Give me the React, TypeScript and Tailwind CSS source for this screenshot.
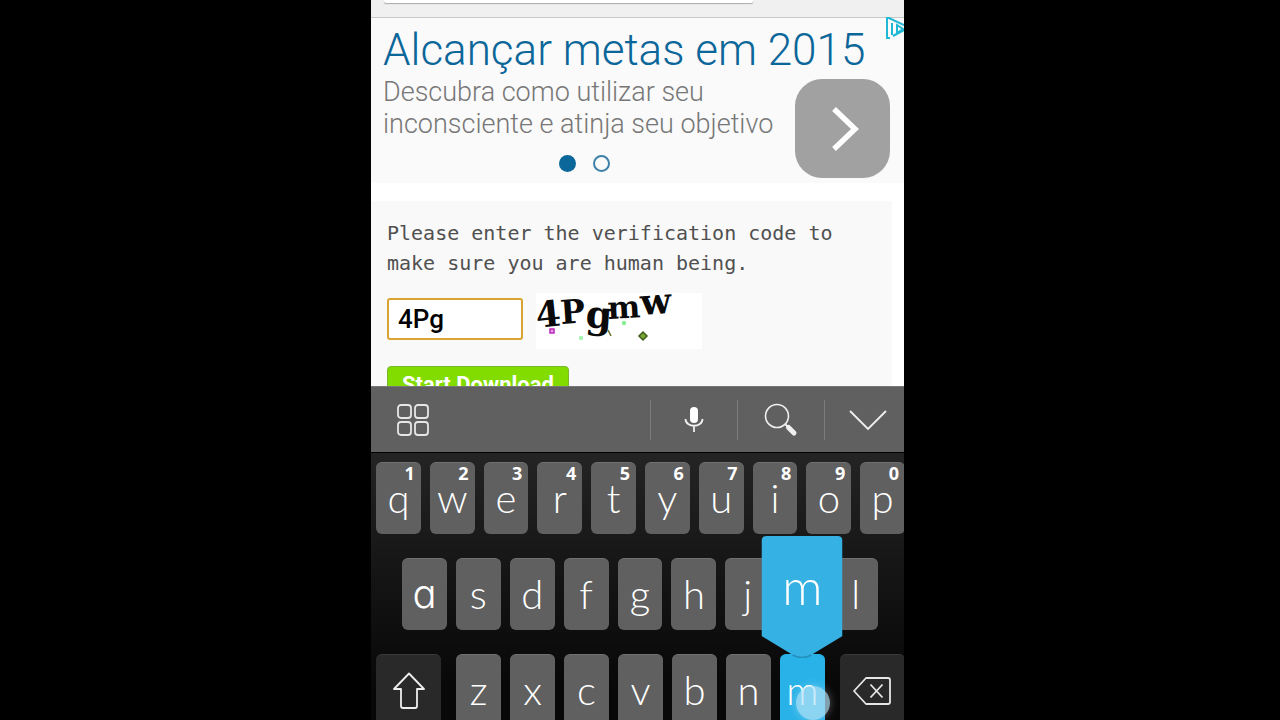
import type { ReactNode } from "react";

const topRow = ["q", "w", "e", "r", "t", "y", "u", "i", "o", "p"];
const homeRow = ["a", "s", "d", "f", "g", "h", "j", "k", "l"];
const bottomRow = ["z", "x", "c", "v", "b", "n"];

function Letter({ char }: { char: string }) {
  const face =
    char === "a"
      ? "font-['Inter',sans-serif] [font-feature-settings:'cv11']"
      : "font-['Lato',sans-serif]";
  return <span className={`${face} text-[40px] font-light leading-8`}>{char}</span>;
}

function Key({ char, hint }: { char: string; hint?: string }) {
  return (
    <button
      type="button"
      className="relative flex h-[72px] items-end justify-center rounded-md border-t border-[#707070] bg-[#606060] pb-5 text-white"
    >
      {hint && (
        <span className="absolute right-1.5 top-0.5 font-['Open_Sans',sans-serif] text-[18px] font-bold leading-4 text-white">
          {hint}
        </span>
      )}
      <Letter char={char} />
    </button>
  );
}

function ToolButton({ label, children }: { label: string; children: ReactNode }) {
  return (
    <button
      type="button"
      aria-label={label}
      className="flex h-10 w-[87px] shrink-0 items-center justify-center border-l border-[#7c7c7c] text-[#f0f0f0]"
    >
      {children}
    </button>
  );
}

function Captcha() {
  return (
    <svg
      width="166"
      height="56"
      viewBox="0 0 166 56"
      role="img"
      aria-label="Verification code"
      className="overflow-visible bg-white"
    >
      <text fontWeight="bold" fontFamily="'DejaVu Serif', serif" fill="#0a0a0a">
        <tspan x="1" y="35" rotate="-6" fontSize="36">
          4
        </tspan>
        <tspan x="25" y="31" rotate="-4" fontSize="33">
          P
        </tspan>
        <tspan x="49" y="34" rotate="4" fontSize="38">
          g
        </tspan>
        <tspan x="72" y="26" rotate="-3" fontSize="31">
          m
        </tspan>
        <tspan x="105" y="22" rotate="-4" fontSize="36">
          w
        </tspan>
      </text>
      <rect x="14" y="36" width="4" height="4" fill="#e9a0e6" stroke="#b827b8" strokeWidth="1.5" />
      <circle cx="45" cy="45" r="2.2" fill="#a5f3b0" />
      <circle cx="88" cy="30" r="2.2" fill="#8bee98" />
      <path d="M72 37l3 6" stroke="#69702a" strokeWidth="1.5" />
      <path d="M107 39l4 4-4 4-4-4z" fill="#78a437" stroke="#3f5f18" strokeWidth="1.5" />
    </svg>
  );
}

function Advert() {
  return (
    <section className="relative h-[165px] shrink-0 bg-[#fafafa] pl-3 font-['Roboto',sans-serif] font-light">
      <h1 className="pt-[7px] text-[44px] leading-[50px] whitespace-nowrap text-[#0b6699]">Alcançar metas em 2015</h1>
      <div className="flex justify-between pr-3.5">
        <div>
          <p className="pt-px text-[27px] leading-8 whitespace-nowrap text-[#777]">
            Descubra como utilizar seu
            <br />
            inconsciente e atinja seu objetivo
          </p>
          <div className="mt-[15px] flex justify-center gap-[17px] pl-3">
            <span className="size-[17px] rounded-full bg-[#0b6699]" />
            <span className="size-[17px] rounded-full border-2 border-[#3d80a8]" />
          </div>
        </div>
        <button
          type="button"
          aria-label="Abrir"
          className="mt-1 flex h-[99px] w-[95px] shrink-0 items-center justify-center rounded-[27px] bg-[#a1a1a1]"
        >
          <svg width="28" height="46" viewBox="0 0 28 46" fill="none" stroke="white" strokeWidth="5.5" className="ml-1">
            <path d="M3 3l21 20L3 43" />
          </svg>
        </button>
      </div>
      <svg
        className="absolute -top-px right-0"
        width="19"
        height="23"
        viewBox="0 0 19 23"
        fill="none"
        stroke="#20b8d4"
        strokeWidth="2"
      >
        <path d="M19 8L4 1H2v20h3" />
        <path d="M7 18V6M8 19l11-6" />
        <path d="M12 8v8l6-4z" />
      </svg>
    </section>
  );
}

function Verification() {
  return (
    <form className="mt-[18px] mr-3 flex-1 bg-[#f9f9f9] px-4 pt-[17px]">
      <label
        htmlFor="code"
        className="block font-['DejaVu_Sans_Mono',monospace] text-[20px] leading-[30px] whitespace-nowrap text-[#505050]"
      >
        Please enter the verification code to
        <br />
        make sure you are human being.
      </label>
      <div className="mt-[15px] flex items-start gap-[13px]">
        <input
          id="code"
          defaultValue="4Pg"
          className="mt-[5px] h-[42px] w-[136px] rounded-[3px] border-2 border-[#d9a431] bg-white px-[9px] font-['Roboto',sans-serif] text-[26px] font-medium text-black outline-none"
        />
        <Captcha />
      </div>
      <button
        type="button"
        className="mt-[17px] rounded-[4px] border border-[#79b82a] bg-[#83dc00] px-3.5 py-1 font-['Roboto',sans-serif] text-[22px] font-bold leading-7 text-white"
      >
        Start Download
      </button>
    </form>
  );
}

function Toolbar() {
  return (
    <div className="flex h-[67px] items-center overflow-hidden border-t border-b border-t-[#777] border-b-black bg-[#606060]">
      <button type="button" aria-label="Apps" className="ml-[26px] text-[#e6e6e6]">
        <svg width="32" height="32" viewBox="0 0 32 32" fill="none" stroke="currentColor" strokeWidth="1.8">
          <rect x="1" y="1" width="13" height="13" rx="3" />
          <rect x="18" y="1" width="13" height="13" rx="3" />
          <rect x="1" y="18" width="13" height="13" rx="3" />
          <rect x="18" y="18" width="13" height="13" rx="3" />
        </svg>
      </button>
      <div className="-mr-[7px] ml-auto flex shrink-0">
        <ToolButton label="Voice input">
          <svg width="20" height="26" viewBox="0 0 20 26" fill="none" stroke="currentColor" strokeWidth="1.8">
            <rect x="6" y="0" width="8" height="16" rx="4" fill="white" stroke="none" />
            <path d="M1.5 12c0 9 17 9 17 0M10 19v6" />
          </svg>
        </ToolButton>
        <ToolButton label="Search">
          <svg width="34" height="34" viewBox="0 0 34 34" fill="none" stroke="currentColor" strokeWidth="1.6">
            <circle cx="13" cy="13" r="11.5" />
            <path d="M21 21l3 3" strokeWidth="2" />
            <path d="M24.500 24.500l5.500 5.500" strokeWidth="5" strokeLinecap="round" />
          </svg>
        </ToolButton>
        <ToolButton label="Hide keyboard">
          <svg width="38" height="22" viewBox="0 0 38 22" fill="none" stroke="currentColor" strokeWidth="1.8">
            <path d="M1 2l18 18L37 2" />
          </svg>
        </ToolButton>
      </div>
    </div>
  );
}

function PressedKey() {
  return (
    <button
      type="button"
      className="relative flex h-[72px] items-end justify-center rounded-md border-t border-[#29b2e8] bg-[#29b2e8] pb-5 text-white"
    >
      <Letter char="m" />
      <span className="absolute bottom-[68px] left-1/2 flex h-[122px] w-[81px] -translate-x-1/2 justify-center pt-5">
        <svg className="absolute inset-0" width="81" height="122" viewBox="0 0 81 122">
          <path d="M5 0h71q5 0 5 5v95L48 120q-7.500 4-15 0L0 100V5q0-5 5-5z" fill="#35b1e3" />
          <path d="M31 119q9.500 5 19 0" fill="none" stroke="#238fba" strokeWidth="1.500" />
        </svg>
        <span className="relative font-['Lato',sans-serif] text-[50px] font-light leading-[60px]">m</span>
      </span>
      <span className="absolute left-4 top-[31px] size-[34px] rounded-full bg-[#b5e2f6]/70 shadow-[0_0_10px_rgba(255,255,255,0.3)]" />
    </button>
  );
}

function Keyboard() {
  return (
    <div className="min-h-0 flex-[334] bg-linear-to-b from-[#242424] from-20% to-[#080808] to-90%">
      <Toolbar />
      <div className="-mr-px mt-[9px] grid grid-cols-10 gap-[9px] pl-[5px]">
        {topRow.map((char, i) => (
          <Key key={char} char={char} hint={String((i + 1) % 10)} />
        ))}
      </div>
      <div className="mt-6 grid grid-cols-9 gap-[9px] pr-[26px] pl-[31px]">
        {homeRow.map((char) => (
          <Key key={char} char={char} />
        ))}
      </div>
      <div className="-mr-px mt-6 flex gap-[15px] pl-[5px]">
        <button
          type="button"
          aria-label="Shift"
          className="flex h-[72px] flex-[65] items-center justify-center rounded-md border-t border-[#3c3c3c] bg-[#292929]"
        >
          <svg width="34" height="38" viewBox="0 0 34 38" fill="none" stroke="#eee" strokeWidth="1.8" strokeLinejoin="round">
            <path d="M17 1.500L32 17h-7v17q0 2-2 2H11q-2 0-2-2V17H2z" />
          </svg>
        </button>
        <div className="grid flex-[368] grid-cols-7 gap-[9px]">
          {bottomRow.map((char) => (
            <Key key={char} char={char} />
          ))}
          <PressedKey />
        </div>
        <button
          type="button"
          aria-label="Backspace"
          className="flex h-[72px] flex-[65] items-center justify-center rounded-md border-t border-[#3c3c3c] bg-[#292929]"
        >
          <svg width="38" height="28" viewBox="0 0 38 28" fill="none" stroke="#e6e6e6" strokeWidth="1.8" strokeLinejoin="round">
            <path d="M13 1h22q2 0 2 2v22q0 2-2 2H13L1 14z" />
            <path d="M17.500 7.500l12 13M29.500 7.500l-12 13" />
          </svg>
        </button>
      </div>
    </div>
  );
}

export default function App() {
  return (
    <div className="grid h-screen grid-cols-[371fr_533fr_376fr] overflow-hidden bg-black">
      <main className="col-start-2 flex h-screen min-w-0 flex-col overflow-hidden bg-white">
        <div className="flex min-h-0 flex-[386] flex-col overflow-hidden">
          <header className="h-[18px] shrink-0 border-b border-[#c9c9c9] bg-[#f0f0f0] pl-[13px]">
            <div className="h-[3px] w-[71%] rounded-b-xs bg-white shadow-[0_1px_1px_#aaa]" />
          </header>
          <Advert />
          <Verification />
        </div>
        <Keyboard />
      </main>
    </div>
  );
}
